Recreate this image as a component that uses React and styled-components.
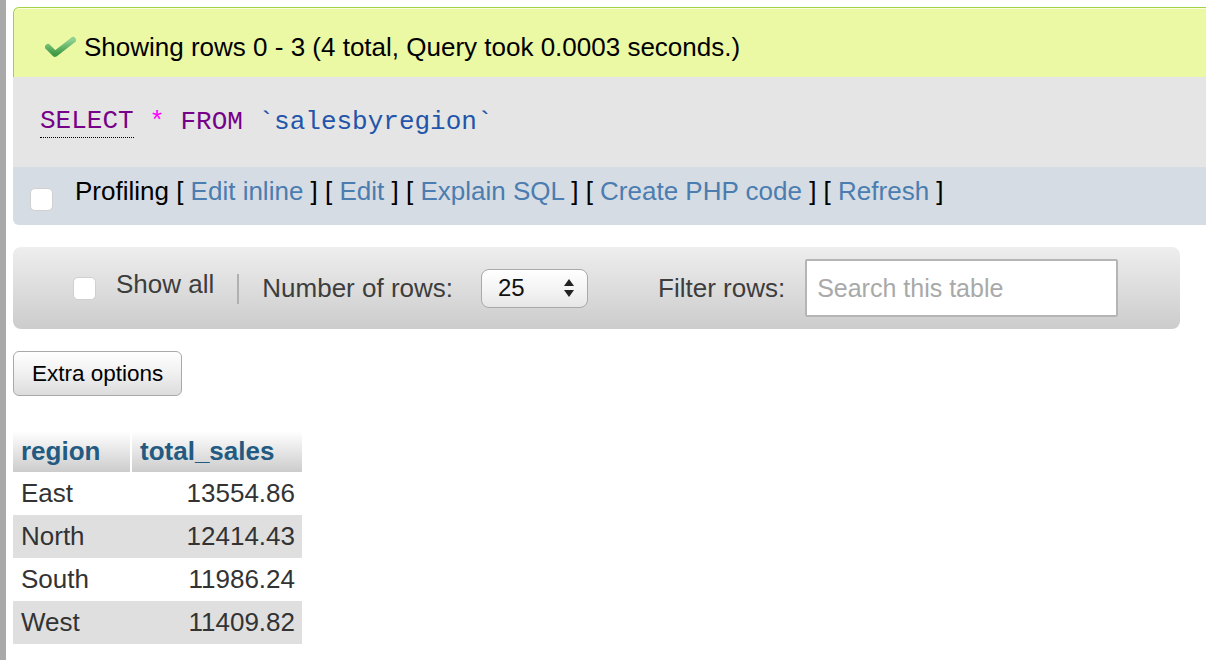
import React from 'react';
import styled, { createGlobalStyle } from 'styled-components';

const GlobalStyle = createGlobalStyle`
  html, body {
    margin: 0;
    padding: 0;
    background: #fff;
    overflow: hidden;
  }
  body {
    font-family: "Liberation Sans", Arial, Helvetica, sans-serif;
    color: #000;
  }
`;

const Page = styled.div`
  display: flex;
  min-height: 660px;
`;

const Strip = styled.div`
  width: 6px;
  flex: 0 0 6px;
  background: #a9a9a9;
`;

const Main = styled.div`
  flex: 1;
  padding-left: 7px;
  display: flex;
  flex-direction: column;
  align-items: flex-start;
`;

const ResultBlock = styled.div`
  width: 1210px;
  margin-top: 7px;
  display: flex;
  flex-direction: column;
`;

const Success = styled.div`
  height: 70px;
  box-sizing: border-box;
  display: flex;
  align-items: center;
  gap: 8px;
  padding-left: 31px;
  padding-top: 9px;
  background: #ebf8a4;
  border: 1px solid #a2d246;
  border-bottom: none;
  border-top-left-radius: 6px;
  box-shadow: inset 0 1px 0 #fbffe0;
  font-size: 26px;
  color: #000;
`;

const SqlBox = styled.div`
  height: 90px;
  display: flex;
  align-items: center;
  padding-left: 27px;
  background: #e5e5e5;
  font-family: "Liberation Mono", "DejaVu Sans Mono", monospace;
  font-size: 26px;
`;

const Keyword = styled.span`
  color: #770088;
  ${p => p.$dotted && `
    border-bottom: 1px dotted #000;
    padding-bottom: 1px;
  `}
`;

const Star = styled.span`
  color: #ff00ff;
`;

const Ident = styled.span`
  color: #2255aa;
`;

const Tools = styled.div`
  height: 58px;
  display: flex;
  align-items: center;
  padding-left: 17px;
  background: #d5dce3;
  border-bottom-left-radius: 6px;
  font-size: 26px;
`;

const Check = styled.span`
  display: inline-block;
  width: 23px;
  height: 23px;
  box-sizing: border-box;
  background: #fff;
  border: 1px solid #d0d0d0;
  border-radius: 5px;
  margin-top: ${p => p.$down || 0}px;
  flex: 0 0 auto;
`;

const ToolText = styled.span`
  margin-left: 22px;
  margin-top: -10px;
  white-space: nowrap;
`;

const Link = styled.a`
  color: #4b7db0;
  text-decoration: none;
`;

const NavBar = styled.div`
  width: 1167px;
  height: 82px;
  box-sizing: border-box;
  margin-top: 22px;
  display: flex;
  align-items: center;
  padding-left: 60px;
  border-radius: 8px;
  background: linear-gradient(#eeeeee, #cccccc);
  font-size: 26px;
  color: #3d3d3d;
`;

const Label = styled.span`
  margin-left: ${p => p.$gap}px;
  margin-top: ${p => p.$up ? -p.$up : 0}px;
  white-space: nowrap;
`;

const Sep = styled.span`
  display: inline-block;
  width: 2px;
  height: 30px;
  margin-left: 23px;
  margin-top: 2px;
  background: #b0b0b0;
`;

const SelectBox = styled.div`
  width: 107px;
  height: 39px;
  box-sizing: border-box;
  margin-left: 28px;
  display: flex;
  align-items: center;
  justify-content: space-between;
  padding: 0 12px 0 16px;
  border: 1px solid #a9a9a9;
  border-radius: 8px;
  background: linear-gradient(#ffffff, #f2f2f2 60%, #e6e6e6);
  box-shadow: inset 0 1px 0 #fff;
  font-size: 24px;
  color: #111;
`;

const SearchInput = styled.input`
  width: 313px;
  height: 58px;
  box-sizing: border-box;
  margin-left: 20px;
  padding: 0 10px;
  border: 2px solid #b5b5b5;
  border-radius: 2px;
  background: #fff;
  font-family: "Liberation Sans", Arial, sans-serif;
  font-size: 25px;
  outline: none;
  &::placeholder {
    color: #a9a9a9;
  }
`;

const Button = styled.button`
  margin-top: 22px;
  height: 45px;
  padding: 0 18px;
  border: 1px solid #a9a9a9;
  border-radius: 6px;
  background: linear-gradient(#ffffff, #f0f0f0 50%, #dcdcdc);
  font-family: "Liberation Sans", Arial, sans-serif;
  font-size: 22.5px;
  color: #000;
`;

const Table = styled.table`
  margin-top: 35px;
  border-collapse: collapse;
  font-size: 26px;
  color: #333;
`;

const Th = styled.th`
  height: 41px;
  padding: 0 8px;
  text-align: left;
  font-weight: bold;
  color: #235a81;
  background: linear-gradient(#ffffff, #cccccc);
  border-right: ${p => p.$gap ? '2px solid #fff' : 'none'};
  width: ${p => p.$w}px;
  box-sizing: border-box;
`;

const Tr = styled.tr`
  background: ${p => p.$odd ? '#dfdfdf' : '#fff'};
`;

const Td = styled.td`
  height: 43px;
  padding: 0 7px 0 8px;
  text-align: ${p => p.$num ? 'right' : 'left'};
`;

const CheckIcon = () => (
  <svg width="31" height="22" viewBox="0 0 31 22">
    <defs>
      <linearGradient id="ok" x1="0" y1="0" x2="0" y2="1">
        <stop offset="0" stopColor="#8fd18f" />
        <stop offset="1" stopColor="#3f9a45" />
      </linearGradient>
    </defs>
    <polyline
      points="3,11 10,18 28,4"
      fill="none"
      stroke="url(#ok)"
      strokeWidth="6"
      strokeLinecap="round"
      strokeLinejoin="round"
    />
  </svg>
);

const SpinArrows = () => (
  <svg width="12" height="22" viewBox="0 0 12 22">
    <polygon points="6,2 11,9 1,9" fill="#222" />
    <polygon points="1,13 11,13 6,20" fill="#222" />
  </svg>
);

const rows = [
  ['East', '13554.86'],
  ['North', '12414.43'],
  ['South', '11986.24'],
  ['West', '11409.82'],
];

export default function App() {
  return (
    <Page>
      <GlobalStyle />
      <Strip />
      <Main>
        <ResultBlock>
          <Success>
            <CheckIcon />
            <span>Showing rows 0 - 3 (4 total, Query took 0.0003 seconds.)</span>
          </Success>
          <SqlBox>
            <Keyword $dotted>SELECT</Keyword>&nbsp;<Star>*</Star>&nbsp;<Keyword>FROM</Keyword>&nbsp;<Ident>`salesbyregion`</Ident>
          </SqlBox>
          <Tools>
            <Check $down={6} />
            <ToolText>
              Profiling [ <Link>Edit inline</Link> ] [ <Link>Edit</Link> ] [ <Link>Explain SQL</Link> ] [ <Link>Create PHP code</Link> ] [ <Link>Refresh</Link> ]
            </ToolText>
          </Tools>
        </ResultBlock>

        <NavBar>
          <Check />
          <Label $gap={20} $up={8}>Show all</Label>
          <Sep />
          <Label $gap={23}>Number of rows:</Label>
          <SelectBox>
            <span>25</span>
            <SpinArrows />
          </SelectBox>
          <Label $gap={70}>Filter rows:</Label>
          <SearchInput placeholder="Search this table" />
        </NavBar>

        <Button>Extra options</Button>

        <Table>
          <thead>
            <tr>
              <Th $gap $w={118}>region</Th>
              <Th $w={171}>total_sales</Th>
            </tr>
          </thead>
          <tbody>
            {rows.map(([region, total], i) => (
              <Tr key={region} $odd={i % 2 === 1}>
                <Td>{region}</Td>
                <Td $num>{total}</Td>
              </Tr>
            ))}
          </tbody>
        </Table>
      </Main>
    </Page>
  );
}
